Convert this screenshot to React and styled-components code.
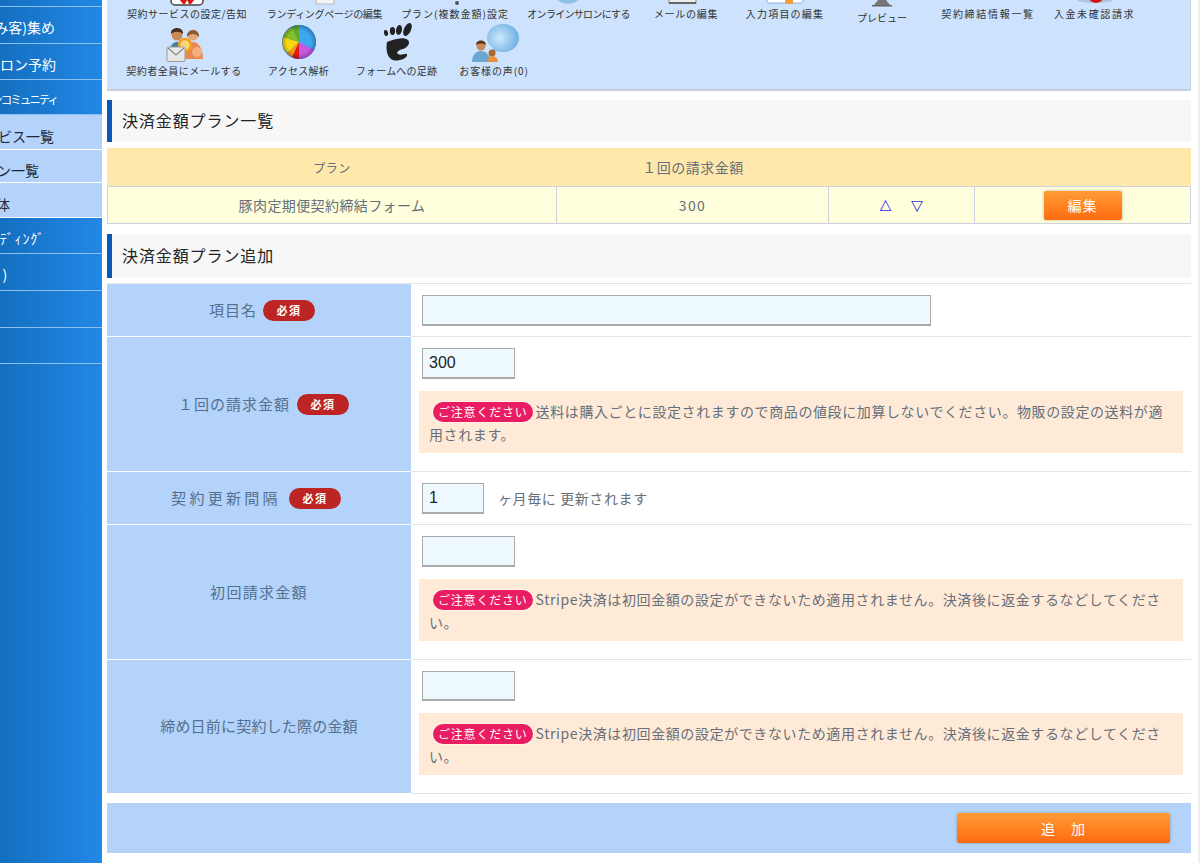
import styled, { createGlobalStyle } from "styled-components";

const GlobalStyle = createGlobalStyle`
  html, body {
    margin: 0;
    height: 100%;
    overflow: hidden;
    background: #fff;
  }
  body {
    font-family: "Noto Sans CJK JP", "Liberation Sans", sans-serif;
    color: #666f7a;
  }
  * {
    box-sizing: border-box;
  }
`;

const sideItems = [
  { h: 7 },
  { h: 37, end: 47, text: "(見込み客)集め" },
  { h: 36, end: 46, text: "オンラインサロン予約" },
  { h: 35, end: 45, text: "オンラインコミュニティ", small: true },
  { h: 35, end: 48, text: "契約サービス一覧", light: true },
  { h: 33, end: 63, text: "決済プラン一覧", light: true },
  { h: 35, end: 92, text: "メール本体", light: true },
  { h: 36, end: 57, text: "ﾗﾝﾃﾞｨﾝｸﾞ", wide: true },
  { h: 37, end: 94, text: "(ｸﾞﾙｰﾌﾟ)", wide: true },
  { h: 37 },
  { h: 36 },
];

const topRow = [
  { icon: "contract", w: 120, gap: 0, track: 0.5, label: "契約サービスの設定/告知" },
  { icon: "page", w: 115, gap: 20, track: -0.3, label: "ランディングページの編集" },
  { icon: "plan", w: 106, gap: 20, track: 1, label: "プラン(複数金額)設定" },
  { icon: "salon", w: 101, gap: 20, track: -0.7, label: "オンラインサロンにする" },
  { icon: "mail", w: 60, gap: 27, track: 0.7, label: "メールの編集" },
  { icon: "input", w: 80, gap: 29, track: 1.2, label: "入力項目の編集" },
  { icon: "preview", w: 44, gap: 35, track: 0, label: "プレビュー", drop: 4 },
  { icon: "none", w: 94, gap: 37, track: 1.7, label: "契約締結情報一覧" },
  { icon: "unpaid", w: 81, gap: 19, track: 1.6, label: "入金未確認請求" },
];

const bottomRow = [
  { icon: "people", w: 114, gap: 0, track: 0.5, label: "契約者全員にメールする" },
  { icon: "pie", w: 59, gap: 28, track: 0.3, label: "アクセス解析" },
  { icon: "foot", w: 79, gap: 29, track: 0.2, label: "フォームへの足跡" },
  { icon: "voice", w: 70, gap: 23, track: 0.9, label: "お客様の声(0)" },
];

const Art = ({ children }) => (
  <svg width="56" height="40" viewBox="0 0 56 40" style={{ overflow: "visible" }}>
    {children}
  </svg>
);

const icons = {
  none: <Art />,
  contract: (
    <Art>
      <rect x="12" y="24" width="32" height="17" rx="4" fill="#fff" stroke="#444" strokeWidth="1.5" />
      <path d="M20 35l4 5h2l2-4 2 4h2l4-5z" fill="#d81818" />
    </Art>
  ),
  page: (
    <Art>
      <rect x="19" y="24" width="18" height="16" fill="#f4f4f4" stroke="#bbb" />
    </Art>
  ),
  plan: (
    <Art>
      <circle cx="30" cy="39" r="2" fill="#555" />
    </Art>
  ),
  salon: (
    <Art>
      <ellipse cx="17" cy="30" rx="13" ry="10" fill="#8fc0e8" />
    </Art>
  ),
  mail: (
    <Art>
      <rect x="11" y="24" width="27" height="15" fill="#eee" stroke="#888" />
      <rect x="11" y="38" width="27" height="2" fill="#666" />
    </Art>
  ),
  input: (
    <Art>
      <rect x="10" y="24" width="36" height="15" rx="2" fill="#fff" stroke="#8ab4e0" />
      <rect x="28" y="36" width="8" height="4" fill="#f0a040" />
    </Art>
  ),
  preview: (
    <Art>
      <path d="M24 20h8v12l4 5H20l4-5z" fill="#777" />
      <rect x="18" y="37" width="20" height="1.5" fill="#666" />
    </Art>
  ),
  unpaid: (
    <Art>
      <ellipse cx="28" cy="36" rx="18" ry="3" fill="#a8c8e8" />
      <circle cx="29" cy="30" r="9" fill="#e01010" />
    </Art>
  ),
  people: (
    <Art>
      <circle cx="21" cy="14" r="5.500" fill="#c98a58" />
      <path d="M15 13c-1-8 13-8 12 0-3-3-9-3-12 0z" fill="#4a3020" />
      <path d="M13 34c0-9 4-13 8-13s8 4 8 13z" fill="#3d7f9c" />
      <circle cx="37" cy="14" r="5.500" fill="#e0a878" />
      <path d="M31 16c-1-9 13-9 12 0-3-4-9-4-12 0z" fill="#8a5a30" />
      <path d="M29 38c0-11 3-17 8-17s10 6 10 17z" fill="#e88a50" />
      <circle cx="41" cy="31" r="5" fill="#f4b080" />
      <circle cx="29" cy="24" r="6" fill="#f8d878" stroke="#f0a020" strokeWidth="2.500" />
      <rect x="11" y="26" width="18" height="14.500" rx="1.500" fill="#e8e8e8" stroke="#9a9a9a" />
      <path d="M12 27l8 7 8-7" fill="none" stroke="#888" strokeWidth="1.200" />
    </Art>
  ),
  pie: (
    <Art>
      <defs>
        <radialGradient id="gloss" cx="0.5" cy="0.5" r="0.5">
          <stop offset="0.7" stopColor="#000" stopOpacity="0" />
          <stop offset="1" stopColor="#003" stopOpacity="0.28" />
        </radialGradient>
      </defs>
      <circle cx="28" cy="21" r="17" fill="#2a8fe0" />
      <path d="M28 21V4a17 17 0 0 1 15 25z" fill="#3ca8f0" />
      <path d="M28 21l15 8a17 17 0 0 1-15 9z" fill="#c858e0" />
      <path d="M28 21v17a17 17 0 0 1-7-2z" fill="#e81818" />
      <path d="M28 21l-7 15a17 17 0 0 1-5-4z" fill="#f89810" />
      <path d="M28 21L16 32a17 17 0 0 1-4-16z" fill="#f8d810" />
      <path d="M28 21L12 16a17 17 0 0 1 9-10z" fill="#88c028" />
      <path d="M28 21l-7-15a17 17 0 0 1 7-2z" fill="#60a830" />
      <circle cx="28" cy="21" r="17" fill="url(#gloss)" />
    </Art>
  ),
  foot: (
    <Art>
      <path
        d="M18 21C24 19 34 15 39 19C42 22 38 27 34 28C29 29 27 32 29 33C32 35 36 32 38 33C39 37 32 39.500 27 39.500C20 39.500 16 32 18 21z"
        fill="#222"
      />
      <ellipse cx="17" cy="12" rx="2" ry="3" transform="rotate(-12 17 12)" fill="#222" />
      <ellipse cx="23.500" cy="10" rx="2.600" ry="4" fill="#222" />
      <ellipse cx="30" cy="9" rx="3" ry="5" transform="rotate(10 30 9)" fill="#222" />
      <ellipse cx="38.500" cy="8.500" rx="3.500" ry="7" transform="rotate(25 38.500 8.500)" fill="#222" />
    </Art>
  ),
  voice: (
    <Art>
      <defs>
        <radialGradient id="bubble" cx="0.4" cy="0.45" r="0.7">
          <stop offset="0" stopColor="#cfe8fb" />
          <stop offset="1" stopColor="#5ba6e0" />
        </radialGradient>
      </defs>
      <path
        d="M37 3C46 3 53 9 53 17C53 25 46 31 37 31C35 31 33 31 31 30L25 34L27 27C23 24 21 21 21 17C21 9 28 3 37 3z"
        fill="url(#bubble)"
      />
      <circle cx="15" cy="25" r="4.500" fill="#c98a58" />
      <path d="M10 24c0-6 10-6 10 0-3-2-7-2-10 0z" fill="#5a3018" />
      <path d="M6 41c0-7 4-11 9-11s9 4 10 11z" fill="#6aa8d0" />
      <circle cx="26" cy="32" r="3.500" fill="#a86a30" />
      <path d="M21 41c0-4 2-6 5-6s6 2 6 6z" fill="#e89040" />
    </Art>
  ),
};

const Page = styled.div`
  display: flex;
  gap: 5px;
  width: 100%;
  height: 863px;
  overflow: hidden;
  border-right: 2px solid #eee;
`;

const Sidebar = styled.nav`
  width: 102px;
  flex: none;
  background: linear-gradient(90deg, #146fc0, #2288e6);
`;

const SideItem = styled.div`
  display: flex;
  align-items: center;
  justify-content: flex-end;
  height: ${(p) => p.$h}px;
  padding-top: ${(p) => (p.$light ? 8 : p.$h > 10 ? 4 : 0)}px;
  padding-right: ${(p) => p.$end || 0}px;
  overflow: hidden;
  white-space: nowrap;
  font-size: ${(p) => (p.$small ? 11.5 : 14)}px;
  letter-spacing: ${(p) => (p.$small ? -2 : p.$wide ? 0.8 : 0)}px;
  color: ${(p) => (p.$light ? "#1f2a38" : "#fff")};
  background: ${(p) => (p.$light ? "#b3d3fb" : "transparent")};
  border-bottom: 1px solid ${(p) => (p.$light ? "#fff" : "#8cc0f0")};
`;

const Main = styled.main`
  width: 1084px;
  flex: none;
`;

const Toolbar = styled.div`
  margin-top: -36px;
  padding: 0 0 11px 20px;
  background: #cce2fd;
  border-right: 1px solid #c4d0dc;
  border-bottom: 2px solid #c8d0d8;
  display: flex;
  flex-direction: column;
`;

const ToolRow = styled.div`
  display: flex;
  height: 57px;
`;

const Tool = styled.div`
  width: ${(p) => p.$w}px;
  margin-left: ${(p) => p.$gap}px;
  padding-top: ${(p) => p.$drop || 0}px;
  flex: none;
  display: flex;
  flex-direction: column;
  align-items: center;
`;

const ToolIcon = styled.div`
  height: 43px;
  flex: none;
`;

const ToolLabel = styled.span`
  font-size: 10px;
  line-height: 14px;
  letter-spacing: ${(p) => p.$track}px;
  white-space: nowrap;
  color: #333;
`;

const Heading = styled.h2`
  margin: ${(p) => p.$top}px 0 6px;
  height: ${(p) => p.$h}px;
  padding: 0 0 2px 10px;
  display: flex;
  align-items: center;
  background: #f7f7f7;
  border-left: 5px solid #0a58b8;
  font-size: 16px;
  font-weight: 400;
  letter-spacing: 0.9px;
  color: #222;
`;

const PlanTable = styled.div`
  display: grid;
  grid-template-columns: 450px 272px 146px 216px;
`;

const HeadCell = styled.div`
  height: 38px;
  display: flex;
  align-items: center;
  justify-content: center;
  grid-column: ${(p) => p.$span || "auto"};
  background: #ffe8ab;
  font-size: ${(p) => (p.$narrow ? 12 : 14)}px;
  letter-spacing: 0.5px;
`;

const BodyCell = styled.div`
  height: 38px;
  display: flex;
  align-items: center;
  justify-content: center;
  gap: 19px;
  background: #ffffdd;
  border: 1px solid #ccd3de;
  border-left-width: ${(p) => (p.$first ? 1 : 0)}px;
  font-size: 14px;
  letter-spacing: ${(p) => p.$track ?? 0.4}px;
`;

const Arrow = styled.span`
  color: #0000ee;
  font-size: 12px;
  -webkit-text-stroke: 0.2px #0000ee;
`;

const OrangeButton = styled.button`
  width: ${(p) => p.$w}px;
  height: ${(p) => p.$h}px;
  padding: 0;
  border: 0;
  border-radius: 2px;
  background: linear-gradient(#ff9c35, #ff6a12);
  box-shadow: 0 0 3px rgba(120, 100, 60, 0.5);
  font-family: inherit;
  font-size: 14px;
  letter-spacing: 1px;
  color: #fff;
`;

const Form = styled.div`
  margin-top: -1px;
  border-top: 1px solid #dfe5ec;
`;

const FormRow = styled.div`
  display: grid;
  grid-template-columns: 304px 1fr;
  border-bottom: 1px solid #dfe5ec;
`;

const RowLabel = styled.div`
  display: flex;
  align-items: center;
  justify-content: center;
  gap: ${(p) => p.$gap || 6}px;
  padding: 0 ${(p) => Math.max(0, -(p.$shift || 0)) * 2}px 2px ${(p) => Math.max(0, p.$shift || 0) * 2}px;
  background: #b3d3fb;
  border-bottom: 1px solid #fff;
  margin-bottom: -1px;
  font-size: 15px;
  letter-spacing: ${(p) => p.$track ?? 0.4}px;
  color: #54708e;
`;

const Required = styled.span`
  width: 52px;
  height: 21px;
  margin-top: 2px;
  display: flex;
  align-items: center;
  justify-content: center;
  border-radius: 11px;
  background: #bd2424;
  font-size: 11px;
  font-weight: 700;
  letter-spacing: 1.5px;
  color: #fff;
`;

const RowBody = styled.div`
  padding: 11px 8px 10px 11px;
`;

const Inline = styled.div`
  display: flex;
  align-items: center;
  gap: 14px;
  font-size: 14px;
  letter-spacing: 0.6px;
`;

const InlineText = styled.span`
  margin-top: -2px;
`;

const TextInput = styled.input`
  display: block;
  width: ${(p) => p.$w}px;
  height: ${(p) => p.$h || 31}px;
  padding: 0 6px;
  background: #eef9ff;
  border: 1px solid #aaa;
  border-bottom-width: 2px;
  font-family: "Liberation Sans", sans-serif;
  font-size: 16px;
  color: #222;
`;

const Note = styled.div`
  margin: 12px 0 8px -3px;
  width: 764px;
  padding: 9px 14px 7px 10px;
  background: #ffead8;
  font-size: 14px;
  line-height: 23px;
  letter-spacing: 0.6px;
`;

const NoteTag = styled.span`
  display: inline-block;
  margin: 2px 3px 0 4px;
  padding: 0 5px;
  height: 20px;
  line-height: 20px;
  vertical-align: top;
  border-radius: 10px;
  background: #ea1d63;
  box-shadow: 0 0 0 1px #fff3e8;
  font-size: 12px;
  letter-spacing: 0.8px;
  color: #fff;
`;

const Footer = styled.div`
  margin-top: 9px;
  height: 50px;
  padding-right: 21px;
  display: flex;
  align-items: center;
  justify-content: flex-end;
  background: #b3d3fb;
`;

const PlanNote = ({ children }) => (
  <Note>
    <NoteTag>ご注意ください</NoteTag>
    {children}
  </Note>
);

const stripeNote = "Stripe決済は初回金額の設定ができないため適用されません。決済後に返金するなどしてください。";

const App = () => {
  return (
    <>
      <GlobalStyle />
      <Page>
        <Sidebar>
          {sideItems.map((item, i) => (
            <SideItem key={i} $h={item.h} $end={item.end} $light={item.light} $small={item.small} $wide={item.wide}>
              {item.text}
            </SideItem>
          ))}
        </Sidebar>
        <Main>
          <Toolbar>
            {[topRow, bottomRow].map((row, r) => (
              <ToolRow key={r}>
                {row.map((tool) => (
                  <Tool key={tool.label} $w={tool.w} $gap={tool.gap} $drop={tool.drop}>
                    <ToolIcon>{icons[tool.icon]}</ToolIcon>
                    <ToolLabel $track={tool.track}>{tool.label}</ToolLabel>
                  </Tool>
                ))}
              </ToolRow>
            ))}
          </Toolbar>

          <Heading $top={9} $h={42}>決済金額プラン一覧</Heading>
          <PlanTable>
            <HeadCell $narrow>プラン</HeadCell>
            <HeadCell>１回の請求金額</HeadCell>
            <HeadCell $span="span 2" />
            <BodyCell $first>豚肉定期便契約締結フォーム</BodyCell>
            <BodyCell $track={1.4}>300</BodyCell>
            <BodyCell>
              <Arrow>△</Arrow>
              <Arrow>▽</Arrow>
            </BodyCell>
            <BodyCell>
              <OrangeButton $w={78} $h={29}>編集</OrangeButton>
            </BodyCell>
          </PlanTable>

          <Heading $top={10} $h={44}>決済金額プラン追加</Heading>
          <Form>
            <FormRow>
              <RowLabel $track={1} $shift={3}>項目名<Required>必須</Required></RowLabel>
              <RowBody><TextInput $w={509} /></RowBody>
            </FormRow>
            <FormRow>
              <RowLabel $track={1} $gap={7} $shift={4.5}>１回の請求金額<Required>必須</Required></RowLabel>
              <RowBody>
                <TextInput $w={93} defaultValue="300" />
                <PlanNote>送料は購入ごとに設定されますので商品の値段に加算しないでください。物販の設定の送料が適用されます。</PlanNote>
              </RowBody>
            </FormRow>
            <FormRow>
              <RowLabel $gap={8} $track={3.3} $shift={-3}>契約更新間隔<Required>必須</Required></RowLabel>
              <RowBody>
                <Inline>
                  <TextInput $w={62} defaultValue="1" />
                  <InlineText>ヶ月毎に 更新されます</InlineText>
                </Inline>
              </RowBody>
            </FormRow>
            <FormRow>
              <RowLabel $track={1.3}>初回請求金額</RowLabel>
              <RowBody>
                <TextInput $w={93} />
                <PlanNote>{stripeNote}</PlanNote>
              </RowBody>
            </FormRow>
            <FormRow>
              <RowLabel $track={0.2}>締め日前に契約した際の金額</RowLabel>
              <RowBody>
                <TextInput $w={93} $h={30} />
                <PlanNote>{stripeNote}</PlanNote>
              </RowBody>
            </FormRow>
          </Form>
          <Footer>
            <OrangeButton $w={213} $h={30}>追　加</OrangeButton>
          </Footer>
        </Main>
      </Page>
    </>
  );
};

export default App;
